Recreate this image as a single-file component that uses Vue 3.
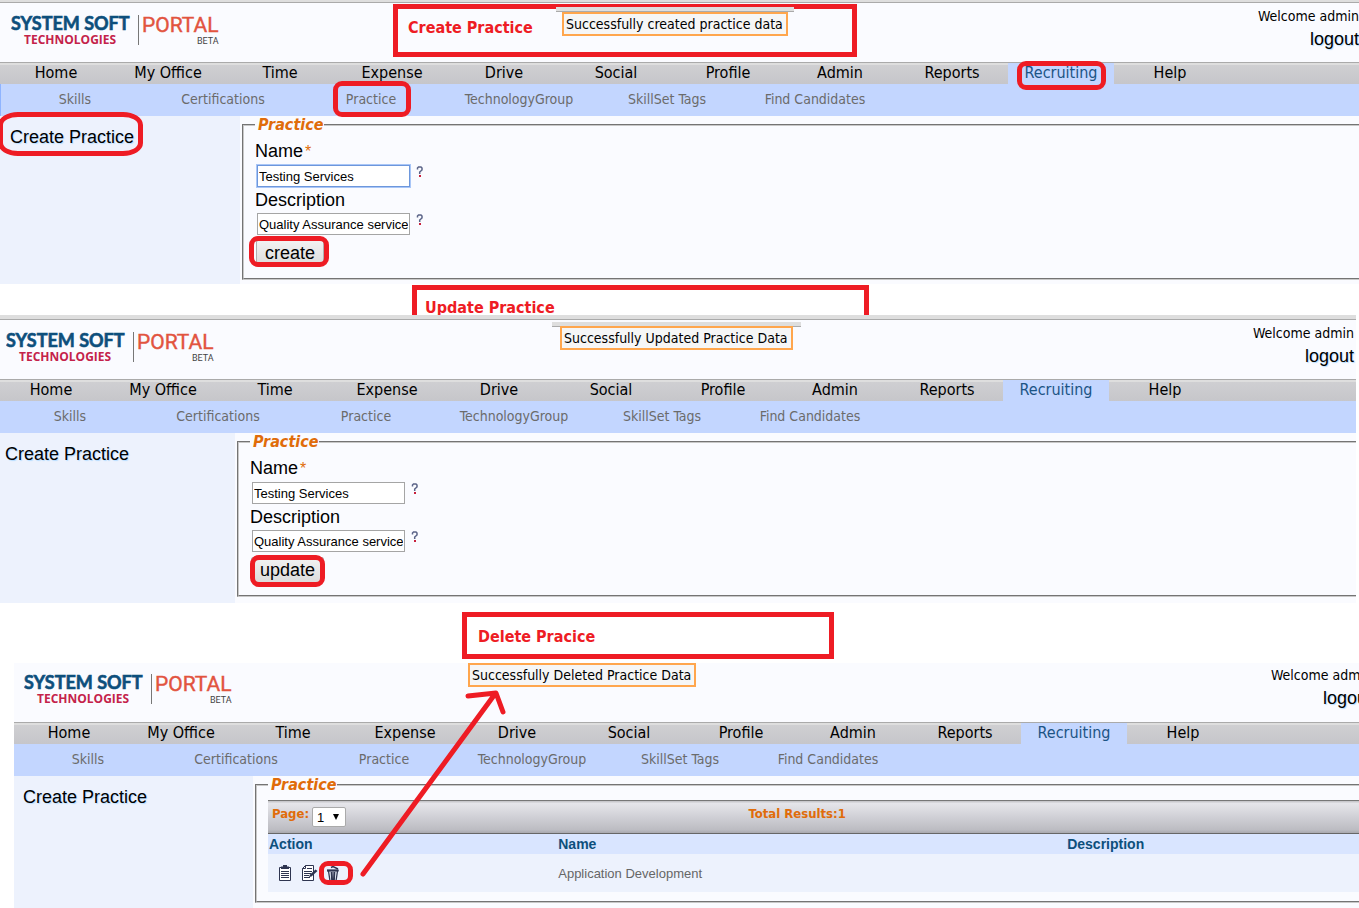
<script setup>
import { ref } from 'vue'

const menu = ['Home', 'My Office', 'Time', 'Expense', 'Drive', 'Social', 'Profile', 'Admin', 'Reports', 'Recruiting', 'Help']
const submenu = ['Skills', 'Certifications', 'Practice', 'TechnologyGroup', 'SkillSet Tags', 'Find Candidates']

const panels = ref([
  { id: 'create', title: 'Create Practice', message: 'Successfully created practice data', action: 'create', name: 'Testing Services', description: 'Quality Assurance services' },
  { id: 'update', title: 'Update Practice', message: 'Successfully Updated Practice Data', action: 'update', name: 'Testing Services', description: 'Quality Assurance services' },
  { id: 'delete', title: 'Delete Pracice', message: 'Successfully Deleted Practice Data', action: '' }
])
const pageNumber = ref('1')
</script>

<template>
  <main class="board">
    <template v-for="p in panels" :key="p.id">
      <div v-if="p.id !== 'create'" class="gap" :class="'gap-' + p.id">
        <h2 class="caption">{{ p.title }}</h2>
      </div>
      <section class="panel" :class="'panel-' + p.id">
        <div class="page">
          <header class="top">
            <svg class="logo" width="212" height="36" viewBox="0 0 212 36" role="img" aria-label="System Soft Technologies Portal Beta">
              <text x="0" y="18" class="logo-system">SYSTEM SOFT</text>
              <text x="13" y="32" class="logo-tech">TECHNOLOGIES</text>
              <rect x="127" y="3" width="1" height="30" fill="#777" />
              <text x="131" y="20" class="logo-portal">PORTAL</text>
              <text x="186" y="32" class="logo-beta">BETA</text>
            </svg>
            <div class="account">
              <span>Welcome admin</span>
              <a href="#" class="arial-link">logout</a>
            </div>
          </header>
          <nav class="menu" aria-label="Main">
            <a v-for="m in menu" :key="m" href="#" :class="{ active: m === 'Recruiting', ring: m === 'Recruiting' && p.id === 'create' }">{{ m }}</a>
          </nav>
          <nav class="submenu" aria-label="Recruiting">
            <a v-for="s in submenu" :key="s" href="#" :class="{ ring: s === 'Practice' && p.id === 'create' }">{{ s }}</a>
          </nav>
          <div class="body">
            <aside class="side">
              <a href="#" class="arial-link" :class="{ ring: p.id === 'create' }">Create Practice</a>
            </aside>
            <div class="content">
              <fieldset>
                <legend>Practice</legend>
                <form v-if="p.action" class="form" @submit.prevent>
                  <label :for="p.id + '-name'">Name<span class="star">*</span></label>
                  <div class="field">
                    <input :id="p.id + '-name'" v-model="p.name" type="text" :class="{ lit: p.id === 'create' }">
                    <svg class="help" width="8" height="12" viewBox="0 0 8 12" aria-hidden="true">
                      <path d="M1.5 3.5V2L2.5 1H5L6 2V4L3.7 6V8" fill="none" stroke="#5b6488" stroke-width="1.5" />
                      <rect x="3" y="9" width="2" height="2" fill="#c8203c" />
                    </svg>
                  </div>
                  <label :for="p.id + '-desc'">Description</label>
                  <div class="field">
                    <input :id="p.id + '-desc'" v-model="p.description" type="text">
                    <svg class="help" width="8" height="12" viewBox="0 0 8 12" aria-hidden="true">
                      <path d="M1.5 3.5V2L2.5 1H5L6 2V4L3.7 6V8" fill="none" stroke="#5b6488" stroke-width="1.5" />
                      <rect x="3" y="9" width="2" height="2" fill="#c8203c" />
                    </svg>
                  </div>
                  <button type="submit" class="submit ring">{{ p.action }}</button>
                </form>
                <div v-else class="results">
                  <div class="pager">
                    <label for="page-number">Page:</label>
                    <span class="picker">
                      <select id="page-number" v-model="pageNumber"><option>1</option></select>
                      <svg width="8" height="7" viewBox="0 0 8 7" aria-hidden="true"><path d="M1 0H7L4 6Z" fill="#000" /></svg>
                    </span>
                    <strong class="total">Total Results:1</strong>
                  </div>
                  <table>
                    <thead>
                      <tr><th class="c-action">Action</th><th class="c-name">Name</th><th>Description</th></tr>
                    </thead>
                    <tbody>
                      <tr>
                        <td>
                          <div class="actions">
                            <button type="button" aria-label="View">
                              <svg width="16" height="16" viewBox="0 0 16 16">
                                <path d="M4.5 2.5H2.5V15.5H13.5V2.5H11.5" fill="#fff" stroke="#2e3550" />
                                <path d="M4 1.5H6V0H10V1.5H12V4H4Z" fill="#2e3550" />
                                <path d="M4 6.5H12M4 8.5H12M4 10.5H12M4 12.5H12" stroke="#2e3550" />
                              </svg>
                            </button>
                            <button type="button" aria-label="Edit">
                              <svg width="17" height="16" viewBox="0 0 17 16">
                                <path d="M4.5 0.5H12.5V15.5H1.5V3.5Z" fill="#fff" stroke="#2e3550" />
                                <path d="M4.5 0.5V3.5H1.500M6 3.5H11M3 6.5H11M3 8.5H10M3 10.5H8M3 12.5H9" fill="none" stroke="#2e3550" />
                                <path d="M8 12L9 9.5L14.5 4.5L16.5 6L10.5 11.5Z" fill="#2e3550" />
                              </svg>
                            </button>
                            <button type="button" aria-label="Delete" class="ring">
                              <svg width="14" height="16" viewBox="0 0 14 16">
                                <path d="M1 5.5H12.5M2.5 6L4 16M11.500 6L10 16M5.3 7L5.8 16M7 7V16M8.7 7L8.200 16" fill="none" stroke="#2e3550" stroke-width="1.3" />
                                <path d="M1 5.500H12.500" stroke="#2e3550" stroke-width="2" />
                                <path d="M5 2.5L7 1.5L12 4" fill="none" stroke="#2e3550" stroke-width="1.5" />
                              </svg>
                            </button>
                          </div>
                        </td>
                        <td>Application Development</td>
                        <td></td>
                      </tr>
                    </tbody>
                  </table>
                </div>
              </fieldset>
            </div>
          </div>
        </div>
        <h2 v-if="p.id === 'create'" class="caption">{{ p.title }}</h2>
        <div class="toast-wrap">
          <p class="toast" role="status">{{ p.message }}</p>
        </div>
        <svg v-if="p.id === 'delete'" class="arrow" width="160" height="210" viewBox="0 0 160 210" aria-hidden="true">
          <path d="M13 194L145 14M118 16L146 13L153 32" fill="none" stroke="#ee1c24" stroke-width="5" stroke-linecap="round" stroke-linejoin="round" />
        </svg>
      </section>
    </template>
  </main>
</template>

<style>
body {
  margin: 0;
  background: #fff;
}
</style>

<style scoped>
* {
  box-sizing: border-box;
}
.board {
  font-family: "DejaVu Sans Condensed", "Noto Sans", sans-serif;
  color: #000;
  overflow: hidden;
}
a {
  color: inherit;
  text-decoration: none;
}
.panel {
  position: relative;
  overflow: hidden;
  background: #fafbff;
}
.panel-create .page {
  border-top: 2px solid #dedede;
}
.panel-update {
  margin-right: 3px;
  border-top: 4px solid #dedede;
}
.panel-delete {
  margin-left: 14px;
}
.panel-update .page {
  margin: 0 0 0 -5px;
}
.panel-delete .page {
  margin: 0 -13px 0 -1px;
}
.top {
  display: flex;
  justify-content: space-between;
  height: 60px;
  padding: 9px 0 0 11px;
  border-top: 1px solid #aaa;
}
.panel-update .top {
  padding-right: 2px;
}
.panel-delete .top {
  height: 59px;
  padding-top: 8px;
  border-top: 0;
}
.logo {
  flex: none;
}
.logo-system {
  font: 700 18px Lato, sans-serif;
  fill: #0d4f7c;
  stroke: #0d4f7c;
  stroke-width: 0.6px;
}
.logo-tech {
  font: 700 12px "Open Sans", sans-serif;
  fill: #c4224a;
}
.logo-portal {
  font: 400 21px Roboto, sans-serif;
  fill: #e2543f;
  stroke: #e2543f;
  stroke-width: 0.4px;
}
.logo-beta {
  font: 400 9px Roboto, sans-serif;
  fill: #444;
}
.account {
  display: flex;
  flex-direction: column;
  align-items: flex-end;
  margin-top: -6px;
  font-size: 14px;
  line-height: 20px;
}
.arial-link {
  font-family: "Liberation Sans", Arial, sans-serif;
  font-size: 18px;
  line-height: 24px;
  text-shadow: 1px 1px 1px #b5dcff;
}
.account .arial-link {
  line-height: 26px;
}
.menu {
  display: flex;
  height: 22px;
  border-top: 1px solid #aaa;
  background: linear-gradient(#dedede 2px, #cfcfd2 2px, #c6c6ca);
}
.menu a {
  flex: 0 0 112px;
  font-size: 16px;
  line-height: 19px;
  text-align: center;
}
.menu .active {
  flex-basis: 106px;
  background: #c3d6ff;
  color: #1c5485;
}
.submenu {
  display: flex;
  height: 32px;
  background: #c3d6ff;
  border-left: 1px solid #8fb4ff;
}
.submenu a {
  flex: 0 0 148px;
  color: #6b6b6b;
  font-size: 14px;
  line-height: 30px;
  text-align: center;
}
.body {
  display: flex;
  min-height: 168px;
}
.panel-update .body {
  min-height: 170px;
}
.panel-delete .body {
  min-height: 132px;
}
.side {
  flex: 0 0 240px;
  padding: 9px 10px;
  background: #edf2fd;
}
.side .arial-link {
  display: inline-block;
}
.content {
  flex: 1;
  min-width: 0;
  padding-left: 2px;
}
fieldset {
  margin: 0 -12px 0 0;
  min-width: 0;
  padding: 0 10px 0 11px;
  border: 2px groove #c8c8c8;
}
legend {
  padding: 0 0 0 3px;
  color: #e06c0a;
  font-size: 16px;
  font-weight: 700;
  font-style: italic;
  line-height: 18px;
}
.form {
  display: flex;
  flex-direction: column;
  align-items: flex-start;
  padding: 4px 0 12px;
  font-family: "Liberation Sans", Arial, sans-serif;
}
.form label {
  font-size: 18px;
  line-height: 26px;
}
.star {
  margin-left: 2px;
  color: #e06c0a;
  font-size: 16px;
}
.field {
  display: flex;
  align-items: flex-start;
  gap: 6px;
  padding-left: 2px;
}
.field input {
  width: 153px;
  height: 22px;
  padding: 0 1px;
  border: 1px solid #a5a5a5;
  background: #fff;
  color: #000;
  font: 13px "Liberation Sans", Arial, sans-serif;
}
.field input.lit {
  border-color: #6d97dc;
  box-shadow: 0 0 0 1px #a9c6f7;
}
.help {
  margin-top: 1px;
}
.submit {
  height: 26px;
  margin: 5px 0 0 1px;
  padding: 0 8px;
  border: 1px solid #b0b0b0;
  border-radius: 2px;
  background: linear-gradient(#f2f2f2, #dcdcdc);
  color: #000;
  font: 18px "Liberation Sans", Arial, sans-serif;
}
.results {
  padding: 6px 0 9px;
}
.pager {
  display: flex;
  align-items: flex-start;
  gap: 3px;
  height: 34px;
  padding: 5px 0 0 4px;
  border-top: 1px solid #777;
  border-bottom: 1px solid #666;
  background: linear-gradient(#c8c8cc 1px, #e6e6eb 2px, #bcbcc2 90%, #a8a8ae);
  color: #e06c0a;
  font-size: 13px;
  font-weight: 700;
  line-height: 16px;
}
.picker {
  position: relative;
  width: 34px;
  height: 20px;
  margin-top: 1px;
}
.picker select {
  appearance: none;
  width: 100%;
  height: 100%;
  padding: 0 0 0 4px;
  border: 1px solid #aaa;
  border-radius: 2px;
  background: #fff;
  font: 13px "Liberation Sans", Arial, sans-serif;
}
.picker svg {
  position: absolute;
  right: 6px;
  top: 7px;
  pointer-events: none;
}
.total {
  margin-left: 36.3%;
}
table {
  width: 100%;
  table-layout: fixed;
  border-collapse: collapse;
  font-family: "Liberation Sans", Arial, sans-serif;
}
th,
td {
  padding: 0 1px;
  text-align: left;
}
th {
  height: 20px;
  background: #d9e5ff;
  color: #0d4f7c;
  font-size: 14px;
  line-height: 20px;
}
td {
  height: 38px;
  background: #edf2fd;
  color: #666;
  font-size: 13px;
}
.c-action {
  width: 26.2%;
}
.c-name {
  width: 46.1%;
}
.actions {
  display: flex;
  gap: 8px;
  padding-left: 8px;
}
.actions button {
  display: block;
  height: 16px;
  padding: 0;
  border: 0;
  background: none;
}
.actions svg {
  display: block;
}
.ring {
  position: relative;
}
.ring::after {
  content: "";
  position: absolute;
  z-index: 2;
  border: 5px solid #ee1c24;
  border-radius: 9px;
  pointer-events: none;
}
.menu .ring::after {
  inset: -2px 8px -6px 9px;
}
.submenu .ring::after {
  inset: -3px 34px -1px 36px;
}
.side .ring::after {
  inset: -13px -9px -7px -12px;
  border-radius: 20px / 13px;
}
.submit.ring::after {
  inset: -5px -6px -2px -8px;
}
.panel-update .submit.ring::after {
  inset: -3px -2px -5px -2px;
}
.actions .ring::after {
  inset: -4px -13px -4px -7px;
}
.caption {
  margin: 0;
  color: #ee1c24;
  border: 5px solid #ee1c24;
  font-size: 16px;
  font-weight: 700;
  line-height: 20px;
}
.panel-create .caption {
  position: absolute;
  left: 393px;
  top: 4px;
  width: 464px;
  height: 53px;
  padding: 9px 10px;
}
.gap {
  overflow: hidden;
}
.gap-update {
  height: 31px;
  padding: 1px 0 0 412px;
}
.gap-update .caption {
  width: 457px;
  height: 50px;
  padding: 8px;
}
.gap-delete {
  height: 60px;
  padding: 9px 0 0 462px;
}
.gap-delete .caption {
  width: 372px;
  height: 47px;
  padding: 10px 11px;
}
.toast-wrap {
  position: absolute;
  border-top: 4px solid #dedede;
}
.panel-create .toast-wrap {
  left: 556px;
  top: 7px;
  padding: 0 6px;
}
.panel-update .toast-wrap {
  left: 552px;
  top: 3px;
  padding: 0 8px;
}
.panel-delete .toast-wrap {
  left: 454px;
  top: 0;
  border: 0;
}
.toast-wrap::before {
  content: "";
  position: absolute;
  inset: 0 0 auto;
  border-top: 1px solid #aaa;
}
.panel-delete .toast-wrap::before {
  display: none;
}
.toast {
  position: relative;
  margin: 0;
  padding: 0 3px 0 2px;
  border: 2px solid #ffa64d;
  background: #f6f6f6;
  font-size: 14px;
  line-height: 20px;
  white-space: nowrap;
}
.panel-create .toast {
  margin-top: 1px;
}
.arrow {
  position: absolute;
  left: 336px;
  top: 17px;
  pointer-events: none;
}
</style>
